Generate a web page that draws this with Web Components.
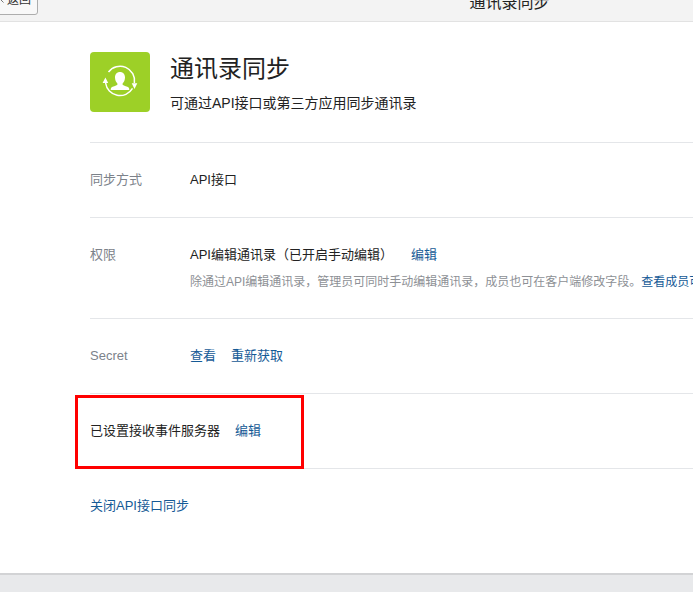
<!DOCTYPE html>
<html lang="zh">
<head>
<meta charset="utf-8">
<title>通讯录同步</title>
<style>
  html, body { margin: 0; height: 100%; overflow: hidden; background: #e8e9eb; }
  body { font: 13px "Liberation Sans", "Noto Sans CJK SC", sans-serif; color: #222; }
</style>
</head>
<body>

<template id="sync-page-tpl">
  <style>
    :host { display: block; width: 1019px; margin-top: -20px; position: relative; }
    .panel { background: #fff; border-bottom: 2px solid #d2d3d5; height: 553px; padding: 30px 0 0 90px; box-sizing: border-box; }
    /* highlight drawn over the screenshot */
    .mark { position: absolute; left: 75px; top: 415px; width: 229px; height: 74px; box-sizing: border-box; border: 3px solid #f00; }
  </style>
  <top-bar>通讯录同步</top-bar>
  <div class="panel"><slot></slot></div>
  <div class="mark"></div>
</template>

<template id="top-bar-tpl">
  <style>
    :host { display: grid; grid-template-columns: 1fr auto 1fr; align-items: center; height: 41px; background: #f3f3f3; border-bottom: 1px solid #e2e2e2; }
    .back { justify-self: start; margin-left: -7px; height: 33px; margin-top: -4px; padding: 0 5px; box-sizing: border-box; width: 45px; display: flex; align-items: center; gap: 3px; background: #f8f8f8; border: 1px solid #adadad; border-radius: 3px; color: #333; font-size: 12px; white-space: nowrap; }
    .title { font-size: 16px; color: #222; }
    svg { flex: none; }
  </style>
  <div class="back">
    <svg width="5" height="8" viewBox="0 0 5 8"><path d="M4.5 .5 1 4l3.5 3.5" fill="none" stroke="#777"/></svg>
    <span>返回</span>
  </div>
  <div class="title"><slot></slot></div>
</template>

<template id="app-head-tpl">
  <style>
    :host { display: flex; gap: 20px; height: 90px; border-bottom: 1px solid #e4e6e9; }
    .logo { width: 60px; height: 60px; border-radius: 4px; background: #9dd027; }
    h1 { margin: 2px 0 0; font-size: 24px; line-height: 30px; font-weight: 400; color: #222; }
    p { margin: 9px 0 0; font-size: 14px; line-height: 20px; color: #222; }
  </style>
  <svg class="logo" viewBox="0 0 60 60">
    <g fill="none" stroke="#fff" stroke-width="1.5">
      <path d="M18.500 20A14.500 14.500 0 0 1 44.400 31"/>
      <path d="M42.500 36.400A14.500 14.500 0 0 1 15.600 31"/>
    </g>
    <path d="M12.600 31h5.600l-2.800-5.400zM41.700 31.300h5.600l-2.800 5.600z" fill="#fff"/>
    <path d="M30 20c-3 0-5 2.200-5 5.400 0 2.500 1 4.600 2.400 6v1.400c-1.400 1.100-4.900 1.700-6 2.700-.5.500-.7 1.500-.7 2.500h18.600c0-1-.2-2-.7-2.500-1.100-1-4.600-1.600-6-2.700v-1.400c1.400-1.400 2.400-3.500 2.400-6 0-3.200-2-5.400-5-5.400z" fill="#fff"/>
  </svg>
  <div>
    <h1><slot name="title"></slot></h1>
    <p><slot name="desc"></slot></p>
  </div>
</template>

<template id="info-row-tpl">
  <style>
    :host { display: flex; border-bottom: 1px solid #e4e6e9; padding: 28px 0 28px; line-height: 18px; color: #222; }
    :host([plain]) { border-bottom: none; }
    .label { width: 100px; flex: none; color: #7c828a; }
    :host([bare]) .label { display: none; }
    .body { white-space: nowrap; }
  </style>
  <div class="label"><slot name="label"></slot></div>
  <div class="body"><slot></slot></div>
</template>

<!-- no whitespace round the slot: it would show up as a space inline -->
<template id="text-link-tpl"><style>
    :host { display: inline; color: #155a96; cursor: pointer; }
    :host([gap]) { margin-left: 15px; }
    :host([gap="wide"]) { margin-left: 18px; }
  </style><slot></slot></template>

<template id="hint-text-tpl">
  <style>
    :host { display: block; margin-top: 9px; margin-bottom: -1px; font-size: 12px; line-height: 18px; color: #8d9095; }
  </style>
  <slot></slot>
</template>

<sync-page>
  <app-head>
    <span slot="title">通讯录同步</span>
    <span slot="desc">可通过API接口或第三方应用同步通讯录</span>
  </app-head>
  <info-row>
    <span slot="label">同步方式</span>
    API接口
  </info-row>
  <info-row>
    <span slot="label">权限</span>
    API编辑通讯录（已开启手动编辑）<text-link gap="wide">编辑</text-link>
    <hint-text>除通过API编辑通讯录，管理员可同时手动编辑通讯录，成员也可在客户端修改字段。<text-link>查看成员可编辑字段</text-link></hint-text>
  </info-row>
  <info-row>
    <span slot="label">Secret</span>
    <text-link>查看</text-link><text-link gap>重新获取</text-link>
  </info-row>
  <info-row bare>已设置接收事件服务器<text-link gap>编辑</text-link></info-row>
  <info-row bare plain><text-link>关闭API接口同步</text-link></info-row>
</sync-page>

<script>
  function define(name, tplId) {
    customElements.define(name, class extends HTMLElement {
      constructor() {
        super();
        const tpl = document.getElementById(tplId);
        this.attachShadow({ mode: "open" }).appendChild(tpl.content.cloneNode(true));
      }
    });
  }

  define("top-bar", "top-bar-tpl");
  define("app-head", "app-head-tpl");
  define("info-row", "info-row-tpl");
  define("text-link", "text-link-tpl");
  define("hint-text", "hint-text-tpl");
  define("sync-page", "sync-page-tpl");
</script>
</body>
</html>
